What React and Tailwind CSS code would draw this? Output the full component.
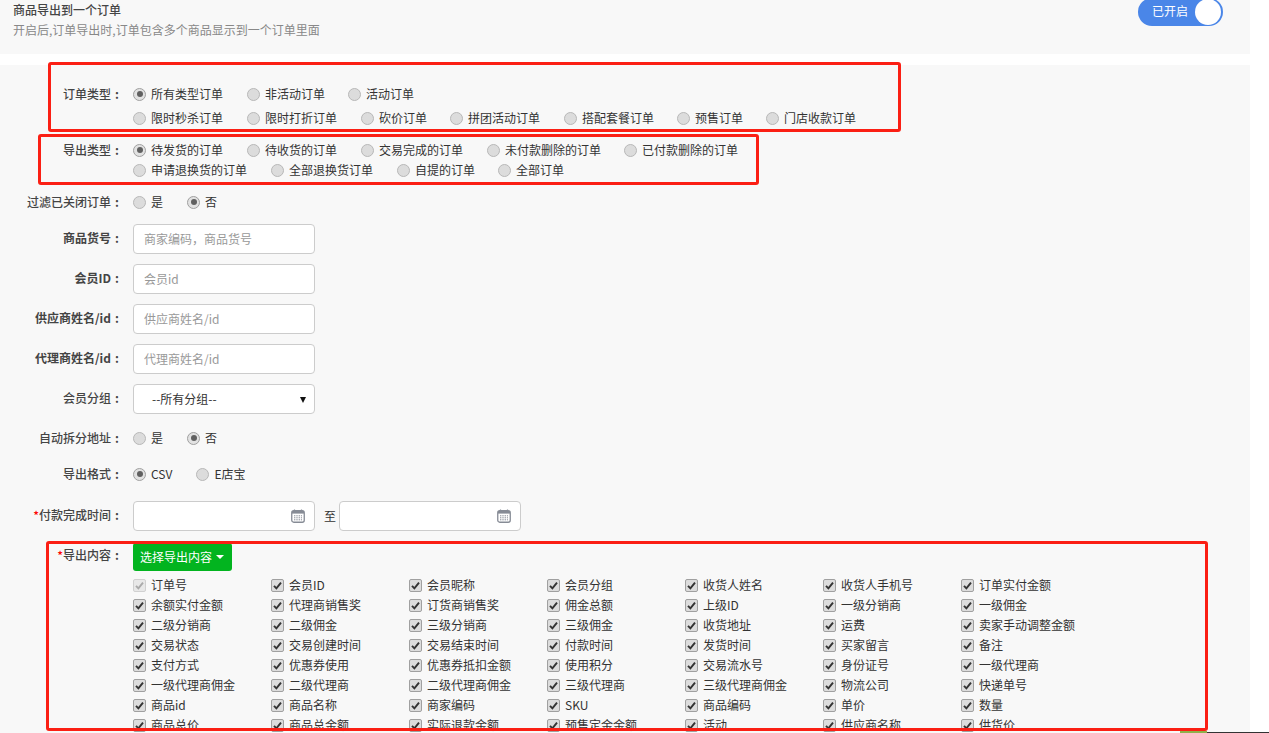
import React from "react";

const font = { fontFamily: '"Noto Sans CJK SC", "Liberation Sans", sans-serif' };

function Radio({ label, checked, tight }) {
  return (
    <span className={`flex items-center h-5 ${tight ? "mr-[23px]" : "mr-6"}`}>
      <span className={`w-[13px] h-[13px] rounded-full border flex items-center justify-center mr-[5px] shrink-0 ${checked ? "border-[#a0a0a0] bg-[#e2e2e2]" : "border-[#b8b8b8] bg-[#dcdcdc]"}`}>
        {checked && <span className="w-[6px] h-[6px] rounded-full bg-[#606060]" />}
      </span>
      <span className="whitespace-nowrap">{label}</span>
    </span>
  );
}

function Check({ label, disabled }) {
  return (
    <span className="flex items-center h-5">
      <span className={`w-[13px] h-[13px] rounded-[2px] border flex items-center justify-center mr-[5px] shrink-0 ${disabled ? "border-[#d0d0d0] bg-[#e8e8e8]" : "border-[#a0a0a0] bg-[#dcdcdc]"}`}>
        <svg width="9" height="9" viewBox="0 0 9 9" fill="none">
          <path d="M1 4.8 L3.4 7.4 L8 1.6" stroke={disabled ? "#aaa" : "#333"} strokeWidth="1.9" />
        </svg>
      </span>
      <span className="whitespace-nowrap">{label}</span>
    </span>
  );
}

function Label({ children, req, bold, className = "" }) {
  return (
    <div className={`w-[123px] mr-[10px] shrink-0 flex justify-end whitespace-nowrap text-[#444] ${bold ? "font-bold" : "font-medium"} ${className}`}>
      {req && <span className="text-[#f00]">*</span>}
      <span>{children}</span>
      <span className="w-3 text-center font-bold">:</span>
    </div>
  );
}

function RadioRow({ label, items, className = "" }) {
  return (
    <div className={`flex items-center h-5 ${className}`}>
      <Label>{label}</Label>
      {items.map(([t, c, tight]) => <Radio key={t} label={t} checked={c} tight={tight} />)}
    </div>
  );
}

function RadioLine({ items, className = "" }) {
  return (
    <div className={`flex items-center h-5 pl-[133px] ${className}`}>
      {items.map(([t, tight]) => <Radio key={t} label={t} tight={tight} />)}
    </div>
  );
}

function InputRow({ label, placeholder }) {
  return (
    <div className="flex items-center h-[30px] mb-[10px]">
      <Label bold className="-mt-[2px]">{label}</Label>
      <input
        placeholder={placeholder}
        className="w-[182px] h-[30px] bg-white border border-[#ccc] rounded-[4px] pl-[10px] pb-[2px] text-xs outline-none placeholder:text-[#999]"
      />
    </div>
  );
}

function Calendar() {
  return (
    <svg className="absolute right-[9px] top-[7px]" width="14" height="14" viewBox="0 0 14 14" fill="none">
      <rect x="0.75" y="1.75" width="12.5" height="11.5" rx="2" stroke="#868b95" strokeWidth="1.3" />
      <rect x="1" y="2" width="12" height="2.6" fill="#868b95" />
      <path d="M3.5 0.5 V3 M10.5 0.5 V3" stroke="#868b95" strokeWidth="1.2" />
      <path d="M3 6.8 H11 M3 8.8 H11 M3 10.8 H11" stroke="#868b95" strokeWidth="1" strokeDasharray="1.4 0.9" />
    </svg>
  );
}

function DateBox() {
  return (
    <div className="relative w-[182px] h-[30px] bg-white border border-[#ccc] rounded-[4px]">
      <Calendar />
    </div>
  );
}

const rows = [
  ["订单号", "会员ID", "会员昵称", "会员分组", "收货人姓名", "收货人手机号", "订单实付金额"],
  ["余额实付金额", "代理商销售奖", "订货商销售奖", "佣金总额", "上级ID", "一级分销商", "一级佣金"],
  ["二级分销商", "二级佣金", "三级分销商", "三级佣金", "收货地址", "运费", "卖家手动调整金额"],
  ["交易状态", "交易创建时间", "交易结束时间", "付款时间", "发货时间", "买家留言", "备注"],
  ["支付方式", "优惠券使用", "优惠券抵扣金额", "使用积分", "交易流水号", "身份证号", "一级代理商"],
  ["一级代理商佣金", "二级代理商", "二级代理商佣金", "三级代理商", "三级代理商佣金", "物流公司", "快递单号"],
  ["商品id", "商品名称", "商家编码", "SKU", "商品编码", "单价", "数量"],
  ["商品总价", "商品总金额", "实际退款金额", "预售定金金额", "活动", "供应商名称", "供货价"],
];

export default function App() {
  return (
    <div style={font} className="relative w-[1269px] h-[733px] overflow-hidden bg-white text-xs text-[#333]">
      {/* top panel */}
      <div className="w-[1250px] h-[54px] bg-[#f8f8f8] flex justify-between pl-[13px] pr-[27px]">
        <div>
          <div className="h-5 leading-5 font-medium text-[#444]">商品导出到一个订单</div>
          <div className="h-5 leading-5 text-[#888]">开启后,订单导出时,订单包含多个商品显示到一个订单里面</div>
        </div>
        <div className="w-[85px] h-7 -mt-[2px] rounded-full bg-[#4a86e8] flex items-center justify-between pl-[14px] pr-[2px] text-white">
          <span className="mb-[2px]">已开启</span>
          <span className="w-[26px] h-[26px] rounded-full bg-white" />
        </div>
      </div>

      {/* form */}
      <div className="mt-[11px] w-[1250px] h-[668px] overflow-hidden bg-[#f8f8f8] pt-[19px]">
        <RadioRow label="订单类型" items={[["所有类型订单", true], ["非活动订单", false, true], ["活动订单"]]} />
        <RadioLine className="mt-1" items={[["限时秒杀订单"], ["限时打折订单"], ["砍价订单", true], ["拼团活动订单"], ["搭配套餐订单", true], ["预售订单", true], ["门店收款订单"]]} />
        <RadioRow className="mt-3" label="导出类型" items={[["待发货的订单", true], ["待收货的订单"], ["交易完成的订单"], ["未付款删除的订单", false, true], ["已付款删除的订单"]]} />
        <RadioLine items={[["申请退换货的订单"], ["全部退换货订单"], ["自提的订单", true], ["全部订单"]]} />
        <RadioRow className="mt-3 mb-3" label="过滤已关闭订单" items={[["是"], ["否", true]]} />

        <InputRow label="商品货号" placeholder="商家编码，商品货号" />
        <InputRow label="会员ID" placeholder="会员id" />
        <InputRow label="供应商姓名/id" placeholder="供应商姓名/id" />
        <InputRow label="代理商姓名/id" placeholder="代理商姓名/id" />

        <div className="flex items-center h-[30px]">
          <Label className="-mt-[2px]">会员分组</Label>
          <div className="relative w-[182px] h-[30px] bg-white border border-[#ccc] rounded-[4px] flex items-center pl-[18px]">
            <span>--所有分组--</span>
            <span className="absolute right-[8px] top-[12px] w-0 h-0 border-x-[3px] border-x-transparent border-t-[6px] border-t-[#111]" />
          </div>
        </div>

        <RadioRow className="mt-[14px]" label="自动拆分地址" items={[["是"], ["否", true]]} />
        <RadioRow className="mt-4" label="导出格式" items={[["CSV", true], ["E店宝"]]} />

        <div className="flex items-center h-[30px] mt-[17px]">
          <Label req className="-mt-[2px]">付款完成时间</Label>
          <DateBox />
          <span className="ml-[9px] mr-[3px]">至</span>
          <DateBox />
        </div>

        <div className="flex items-start mt-3">
          <div className="h-5 flex items-center mt-[2px]"><Label req>导出内容</Label></div>
          <button className="w-[99px] h-7 bg-[#02b41f] rounded-[3px] text-white text-xs flex items-center pl-[7px]">
            选择导出内容
            <span className="ml-[4px] w-0 h-0 border-x-4 border-x-transparent border-t-4 border-t-white" />
          </button>
        </div>

        <div className="mt-1 ml-[133px] grid grid-cols-[repeat(7,138px)]">
          {rows.flat().map((t, i) => <Check key={t + i} label={t} disabled={i === 0} />)}
        </div>
      </div>

      {/* red annotation frames */}
      <div className="absolute left-[48px] top-[62px] w-[853px] h-[70px] border-[3px] border-[#fb1f14] rounded-[3px]" />
      <div className="absolute left-[38px] top-[134px] w-[721px] h-[51px] border-[3px] border-[#fb1f14] rounded-[3px]" />
      <div className="absolute left-[46px] top-[541px] w-[1162px] h-[190px] border-[3px] border-[#fb1f14] rounded-[3px]" />

      {/* sliver of the next screenshot */}
      <div className="absolute left-[1180px] top-[731px] w-[27px] h-[2px] bg-[#8fb04a]" />
      <div className="absolute left-[1207px] top-[732px] w-[62px] h-px bg-[#333]" />
    </div>
  );
}
